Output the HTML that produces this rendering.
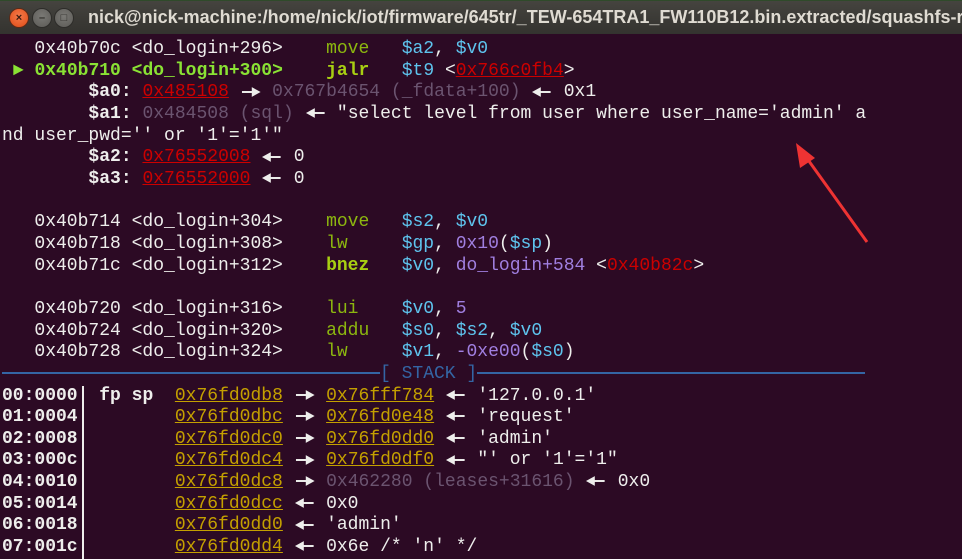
<!DOCTYPE html>
<html><head><meta charset="utf-8"><style>
*{margin:0;padding:0}
body{width:962px;height:552px;overflow:hidden;background:#2c0a24;position:relative;font-family:"Liberation Mono","DejaVu Sans Mono",monospace}
#tb{position:absolute;left:0;top:0;width:962px;height:34px;overflow:hidden;background:linear-gradient(#45443f,#3a3935 60%,#34332f);border-top:1px solid #2f4a2a;box-sizing:border-box}
.btn{position:absolute;top:7px;width:20px;height:20px;border-radius:50%;box-sizing:border-box}
#c{left:9px;background:radial-gradient(circle at 50% 40%,#f47a4a,#df4b16);border:1px solid #5a2a18}
#m{left:32px;background:radial-gradient(circle at 50% 40%,#7a7975,#5b5a56);border:1px solid #2d2c29}
#x{left:54px;background:radial-gradient(circle at 50% 40%,#7a7975,#5b5a56);border:1px solid #2d2c29}
.btn span{position:absolute;left:0;right:0;top:0;bottom:0;text-align:center;font:bold 11px/18px "Liberation Sans",sans-serif;color:#3a1a10}
#m span,#x span{color:#2f2e2a}
#t{position:absolute;left:88px;top:6px;font:bold 18px/20px "Liberation Sans",sans-serif;color:#dfdbd2;white-space:nowrap;letter-spacing:0px}
pre{position:absolute;left:2px;top:39px;font-size:18px;line-height:21.65px;color:#eeeeec;white-space:pre;font-family:"Liberation Mono",monospace}
.a{display:inline-block;width:21.6px;height:12px;vertical-align:middle}
.g{color:#8cb70f}.G{color:#a8cf12;font-weight:bold}.L{color:#8ae234;font-weight:bold}
.c{color:#5ec4ee}.p{color:#a07fe0}.d{color:#6b5470}
.r{color:#cc0000;text-decoration:underline}.R{color:#cc0000}
.y{color:#c4a000;text-decoration:underline}.b{font-weight:bold}
.s{color:#3465a4}
.ln{display:inline-block;height:2px;background:#3465a4;vertical-align:middle}
.v{display:inline-block;width:10.8px;position:relative;height:21.65px;vertical-align:top}
.v:after{content:"";position:absolute;left:4px;top:0;width:2px;height:100%;background:#eeeeec}
</style></head><body>
<svg width="0" height="0" style="position:absolute"><defs>
<symbol id="l" viewBox="0 0 22 12"><rect x="8" y="5" width="12" height="2" fill="#eeeeec"/><polygon points="1,6 10,1 10,11" fill="#eeeeec"/></symbol>
<symbol id="r" viewBox="0 0 22 12"><rect x="2" y="5" width="12" height="2" fill="#eeeeec"/><polygon points="21,6 12,1 12,11" fill="#eeeeec"/></symbol>
</defs></svg>
<div id="tb"><div class="btn" id="c"><span>×</span></div><div class="btn" id="m"><span>–</span></div><div class="btn" id="x"><span>□</span></div>
<div id="t">nick@nick-machine:/home/nick/iot/firmware/645tr/_TEW-654TRA1_FW110B12.bin.extracted/squashfs-root</div></div>
<pre>   0x40b70c &lt;do_login+296&gt;    <span class="g">move</span>   <span class="c">$a2</span>, <span class="c">$v0</span>
 <span class="L">►</span> <span class="L">0x40b710 &lt;do_login+300&gt;</span>    <span class="G">jalr</span>   <span class="c">$t9</span> &lt;<span class="r">0x766c0fb4</span>&gt;
        <span class="b">$a0:</span> <span class="r">0x485108</span> <svg class="a"><use href="#r"/></svg> <span class="d">0x767b4654 (_fdata+100)</span> <svg class="a"><use href="#l"/></svg> 0x1
        <span class="b">$a1:</span> <span class="d">0x484508 (sql)</span> <svg class="a"><use href="#l"/></svg> "select level from user where user_name='admin' a
nd user_pwd='' or '1'='1'"
        <span class="b">$a2:</span> <span class="r">0x76552008</span> <svg class="a"><use href="#l"/></svg> 0
        <span class="b">$a3:</span> <span class="r">0x76552000</span> <svg class="a"><use href="#l"/></svg> 0

   0x40b714 &lt;do_login+304&gt;    <span class="g">move</span>   <span class="c">$s2</span>, <span class="c">$v0</span>
   0x40b718 &lt;do_login+308&gt;    <span class="g">lw</span>     <span class="c">$gp</span>, <span class="p">0x10</span>(<span class="c">$sp</span>)
   0x40b71c &lt;do_login+312&gt;    <span class="G">bnez</span>   <span class="c">$v0</span>, <span class="p">do_login+584</span> &lt;<span class="R">0x40b82c</span>&gt;

   0x40b720 &lt;do_login+316&gt;    <span class="g">lui</span>    <span class="c">$v0</span>, <span class="p">5</span>
   0x40b724 &lt;do_login+320&gt;    <span class="g">addu</span>   <span class="c">$s0</span>, <span class="c">$s2</span>, <span class="c">$v0</span>
   0x40b728 &lt;do_login+324&gt;    <span class="g">lw</span>     <span class="c">$v1</span>, <span class="p">-0xe00</span>(<span class="c">$s0</span>)
<span class="ln" style="width:378px"></span><span class="s">[ STACK ]</span><span class="ln" style="width:388px"></span>
<span class="b">00:0000</span><i class="v"></i> <span class="b">fp sp</span>  <span class="y">0x76fd0db8</span> <svg class="a"><use href="#r"/></svg> <span class="y">0x76fff784</span> <svg class="a"><use href="#l"/></svg> '127.0.0.1'
<span class="b">01:0004</span><i class="v"></i>        <span class="y">0x76fd0dbc</span> <svg class="a"><use href="#r"/></svg> <span class="y">0x76fd0e48</span> <svg class="a"><use href="#l"/></svg> 'request'
<span class="b">02:0008</span><i class="v"></i>        <span class="y">0x76fd0dc0</span> <svg class="a"><use href="#r"/></svg> <span class="y">0x76fd0dd0</span> <svg class="a"><use href="#l"/></svg> 'admin'
<span class="b">03:000c</span><i class="v"></i>        <span class="y">0x76fd0dc4</span> <svg class="a"><use href="#r"/></svg> <span class="y">0x76fd0df0</span> <svg class="a"><use href="#l"/></svg> "' or '1'='1"
<span class="b">04:0010</span><i class="v"></i>        <span class="y">0x76fd0dc8</span> <svg class="a"><use href="#r"/></svg> <span class="d">0x462280 (leases+31616)</span> <svg class="a"><use href="#l"/></svg> 0x0
<span class="b">05:0014</span><i class="v"></i>        <span class="y">0x76fd0dcc</span> <svg class="a"><use href="#l"/></svg> 0x0
<span class="b">06:0018</span><i class="v"></i>        <span class="y">0x76fd0dd0</span> <svg class="a"><use href="#l"/></svg> 'admin'
<span class="b">07:001c</span><i class="v"></i>        <span class="y">0x76fd0dd4</span> <svg class="a"><use href="#l"/></svg> 0x6e /* 'n' */
</pre>
<svg style="position:absolute;left:0;top:0" width="962" height="552"><line x1="867" y1="242" x2="806" y2="157" stroke="#ee3333" stroke-width="3"/><polygon points="796,143 800,168 815,158" fill="#ee3333"/></svg>
</body></html>
